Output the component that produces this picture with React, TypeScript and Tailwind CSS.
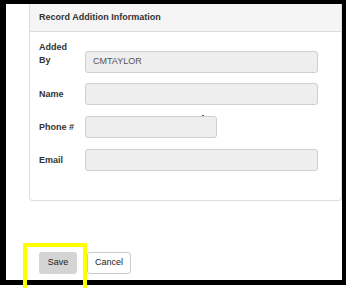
import React from "react";

const font = { fontFamily: '"Liberation Sans", Arial, sans-serif' };

const Field: React.FC<{ label: string; value?: string; short?: boolean; className?: string }> = ({
  label,
  value = "",
  short,
  className = "",
}) => (
  <div className={`flex items-center ${className}`}>
    <label className="w-[46px] shrink-0 text-[9px] font-bold leading-[13px] text-[#333]">{label}</label>
    <div
      className={`h-[22px] flex items-center rounded-[3px] border border-[#cfcfcf] bg-[#eeeeee] px-[7px] text-[9px] text-[#555] ${
        short ? "w-[132px]" : "w-[233px]"
      }`}
    >
      {value}
    </div>
  </div>
);

const App: React.FC = () => {
  return (
    <div className="relative h-[288px] w-[346px] overflow-hidden bg-white" style={font}>
      <div className="flex h-[285px] w-[346px] flex-col border-b-[5px] border-l-[6px] border-r-[4px] border-t-[4px] border-black bg-white">
        {/* record panel */}
        <section className="ml-[23px] rounded-b-[4px] border border-t-0 border-[#dddddd]">
          <div className="flex h-[28px] items-center border-b border-[#dddddd] bg-[#f5f5f5] pl-[9px]">
            <h2 className="text-[9px] font-bold text-[#333]">Record Addition Information</h2>
          </div>
          <div className="relative pb-[29px] pl-[9px] pt-[9px]">
            <div className="flex items-start">
              <label className="w-[46px] shrink-0 text-[9px] font-bold leading-[13px] text-[#333]">
                Added
                <br />
                By
              </label>
              <div className="mt-[10px] flex h-[22px] w-[233px] items-center rounded-[3px] border border-[#cfcfcf] bg-[#eeeeee] px-[7px] text-[9px] text-[#555]">
                CMTAYLOR
              </div>
            </div>
            <Field label="Name" className="mt-[10px]" />
            <Field label="Phone #" short className="mt-[11px]" />
            <Field label="Email" className="mt-[11px]" />
            {/* stray cursor dot */}
            <span className="absolute left-[172px] top-[83px] h-[1px] w-[2px] bg-[#555]" />
          </div>
        </section>

        <div className="ml-[33px] mt-[51px] flex gap-[10px]">
          <button className="h-[22px] w-[38px] rounded-[3px] bg-[#d4d4d4] text-[9px] text-[#222]">Save</button>
          <button className="h-[22px] w-[44px] rounded-[3px] border border-[#cccccc] bg-white text-[9px] text-[#222]">
            Cancel
          </button>
        </div>
      </div>

      {/* highlight annotation */}
      <div className="absolute left-[23px] top-[243px] h-[45px] w-[64px] border-[4px] border-b-0 border-[#ffff00]" />
    </div>
  );
};

export default App;
